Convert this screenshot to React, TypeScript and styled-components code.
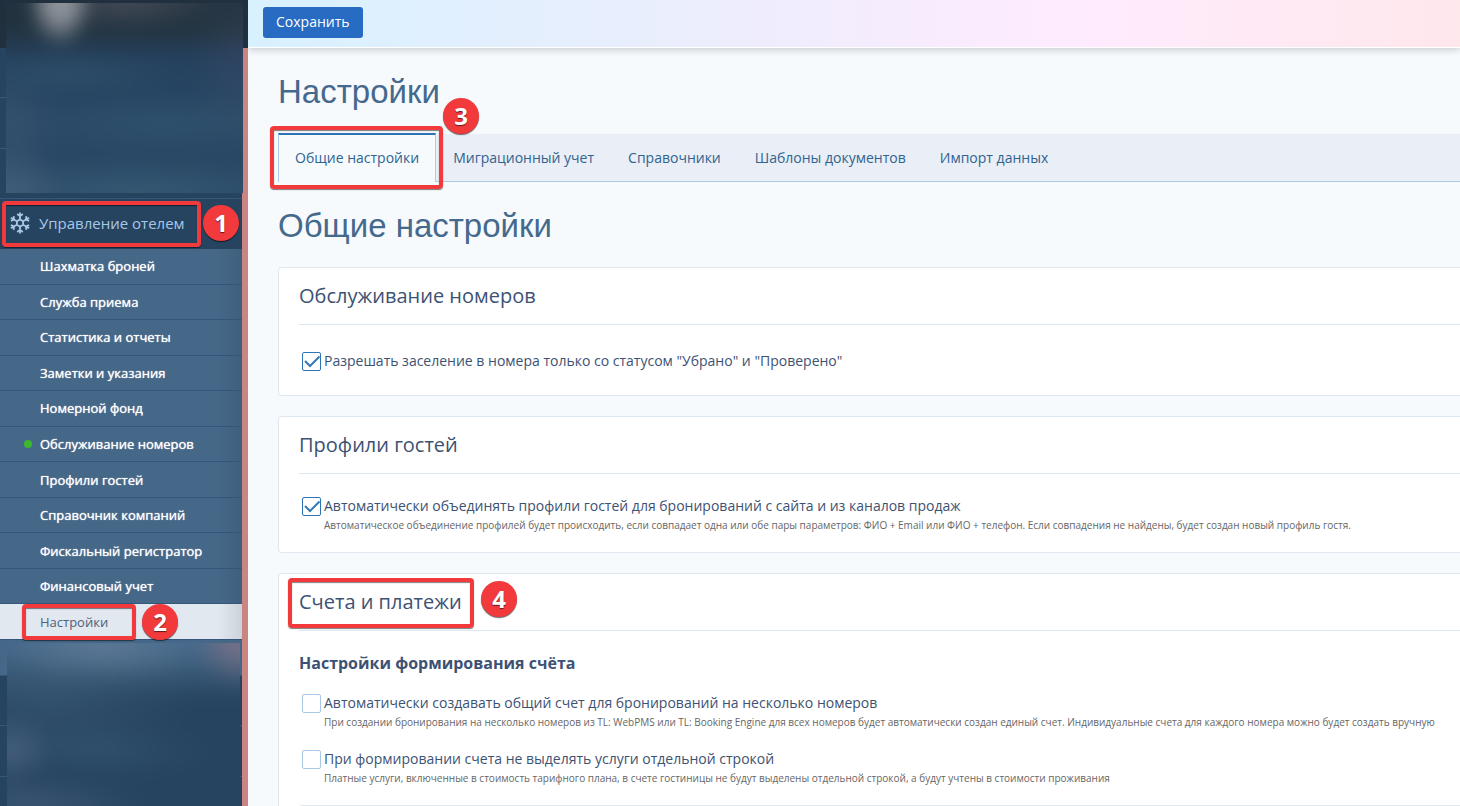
import React from "react";
import styled, { createGlobalStyle, css } from "styled-components";

const GlobalStyle = createGlobalStyle`
  *, *::before, *::after { box-sizing: border-box; }
  body {
    margin: 0;
    background: #f6fafd;
    color: #3d5273;
    font-family: "Open Sans", "Noto Sans", sans-serif;
    font-size: 14px;
  }
  h1, h2, h3, h4, p, ul { margin: 0; padding: 0; }
  ul { list-style: none; }
  a { color: inherit; text-decoration: none; }
`;

const Shell = styled.div`
  display: flex;
  height: 100vh;
  overflow: hidden;
`;

/* Sidebar */

const Sidebar = styled.aside`
  position: relative;
  flex: 0 0 248px;
  display: flex;
  flex-direction: column;
`;

const Brand = styled.div`
  flex: 0 0 48px;
  background: #21303e;
`;

const Nav = styled.nav`
  flex: 1;
  background: #26435f;
  border-right: 6px solid #c98581;
`;

const ClosedSections = styled.div`
  display: grid;
  grid-auto-rows: 1fr;
  min-height: 151px;
`;

const ClosedSection = styled.div`
  border-bottom: 1px solid #35587a;
`;

const SectionHead = styled.a`
  display: flex;
  align-items: center;
  gap: 9px;
  height: 50px;
  padding: 0 0 2px 10px;
  color: #a6c8e8;
  font-size: 15px;
  line-height: 20px;
`;

const SubMenu = styled.ul`
  display: grid;
  grid-auto-rows: 1fr;
  min-height: 391px;
  background: linear-gradient(to right, #466888 218px, #3f5f7d);
`;

const SubItem = styled.li`
  display: grid;
  position: relative;
  border-bottom: 1px solid #33567a;
`;

const SubLink = styled.a<{ $active?: boolean }>`
  display: flex;
  align-items: center;
  padding-left: 40px;
  font-size: 13px;
  line-height: 18px;
  color: #ffffff;
  text-shadow: 0 0 1px #ffffff;
  ${(p) =>
    p.$active &&
    css`
      background: linear-gradient(to right, #e1e8f0 218px, #cbd2d9);
      color: #4f6078;
      text-shadow: none;
    `}
`;

const OnlineDot = styled.span`
  position: absolute;
  left: 24px;
  top: 50%;
  width: 8px;
  height: 8px;
  margin-top: -4px;
  border-radius: 50%;
  background: #3cb82c;
`;

const PaleRow = styled.div`
  height: 36px;
  background: #466888;
  border-bottom: 1px solid #35587a;
`;

const Haze = styled.div`
  position: absolute;
  z-index: 1;
  overflow: hidden;
  &::before {
    content: "";
    position: absolute;
    inset: -20px;
    filter: blur(8px);
  }
`;

const HazeTop = styled(Haze)`
  left: 6px;
  top: 3px;
  width: 237px;
  height: 190px;
  &::before {
    background:
      radial-gradient(ellipse 32px 46px at 74px 18px, rgba(165, 168, 175, 0.8) 40%, transparent),
      radial-gradient(ellipse 100px 30px at 140px 18px, rgba(84, 86, 98, 0.7), transparent),
      radial-gradient(ellipse 120px 24px at 80px 90px, rgba(60, 95, 120, 0.4), transparent),
      radial-gradient(ellipse 160px 28px at 180px 140px, rgba(60, 98, 125, 0.4), transparent),
      radial-gradient(ellipse 60px 50px at 20px 140px, rgba(80, 100, 130, 0.35), transparent),
      radial-gradient(ellipse 60px 46px at 20px 205px, rgba(90, 110, 140, 0.5), transparent),
      radial-gradient(ellipse 170px 30px at 150px 208px, rgba(65, 105, 130, 0.5), transparent),
      radial-gradient(ellipse 60px 100px at 262px 80px, rgba(70, 80, 110, 0.35), transparent),
      linear-gradient(to bottom, #22313f, #22333f 46px, #24405d 74px, #264562 110px, #2b4a67);
  }
`;

const HazeBottom = styled(Haze)`
  left: 7px;
  top: 643px;
  width: 233px;
  bottom: 0;
  &::before {
    background:
      radial-gradient(ellipse 50px 44px at 255px 20px, rgba(150, 120, 135, 0.7), transparent),
      radial-gradient(ellipse 110px 36px at 115px 24px, rgba(110, 135, 160, 0.6), transparent),
      radial-gradient(ellipse 44px 36px at 22px 128px, rgba(90, 112, 145, 0.6), transparent),
      radial-gradient(ellipse 120px 30px at 110px 128px, rgba(58, 95, 120, 0.45), transparent),
      radial-gradient(ellipse 150px 60px at 60px 75px, rgba(65, 98, 125, 0.45), transparent),
      radial-gradient(ellipse 120px 30px at 40px 182px, rgba(80, 105, 135, 0.5), transparent),
      linear-gradient(to bottom, #446685, #44668a 24px, #3b5d7b 42px, #26435f 78px);
  }
`;

/* Step marks */

const StepFrame = styled.span<{ $inset: string }>`
  position: absolute;
  z-index: 2;
  inset: ${(p) => p.$inset};
  border: 4px solid #f23a3c;
  border-radius: 4px;
  box-shadow: 0 1px 1px rgba(0, 0, 0, 0.5), inset 0 1px 1px rgba(0, 0, 0, 0.5);
  pointer-events: none;
`;

const StepNumber = styled.span<{ $left: string; $top: string }>`
  position: absolute;
  z-index: 2;
  left: ${(p) => p.$left};
  top: ${(p) => p.$top};
  display: grid;
  place-items: center;
  width: 36px;
  height: 36px;
  border-radius: 50%;
  background: #f23a3c;
  box-shadow: 0 1px 1px rgba(0, 0, 0, 0.6);
  color: #ffffff;
  font: 700 24px/36px "Open Sans", sans-serif;
  text-shadow: 0 1px 1px rgba(0, 0, 0, 0.6);
  pointer-events: none;
`;

const Anchor = styled.div`
  position: relative;
`;

/* Main column */

const Main = styled.main`
  flex: 1;
  min-width: 0;
  display: flex;
  flex-direction: column;
`;

const TopBar = styled.header`
  flex: 0 0 48px;
  display: flex;
  align-items: flex-start;
  padding: 7px 15px;
  border-bottom: 1px solid #ffffff;
  background: linear-gradient(to right, #d8f1ff, #e9eefd 33%, #feebfe 67%, #ffe8ec) padding-box;
  box-shadow: 0 1px 8px rgba(0, 0, 0, 0.22);
`;

const SaveButton = styled.button`
  height: 31px;
  padding: 0 13px 2px;
  border: 0;
  border-radius: 3px;
  background: #286bc2;
  color: #ffffff;
  font: 400 14px/20px "Open Sans", sans-serif;
`;

const Content = styled.div`
  flex: 1;
  min-height: 0;
  overflow: hidden;
  padding: 22px 0 0 30px;
`;

const PageTitle = styled.h1`
  color: #45698c;
  font: 400 33px/44px "Liberation Sans", Arial, sans-serif;
`;

const SectionTitle = styled(PageTitle).attrs({ as: "h2" })`
  margin: 22px 0 19px;
`;

const Tabs = styled.nav`
  display: flex;
  height: 48px;
  margin-top: 20px;
  border-bottom: 1px solid #aecbe6;
  background: #eaeef6;
`;

const Tab = styled.a<{ $active?: boolean }>`
  display: flex;
  align-items: center;
  position: relative;
  padding: 0 17px;
  line-height: 20px;
  color: #2f6390;
  ${(p) =>
    p.$active &&
    css`
      margin: -1px 0;
      padding: 0 16px 2px;
      border: 1px solid #aecbe6;
      border-top: 2px solid #2e73b2;
      border-bottom: 0;
      background: #f6fafd;
    `}
`;

const Card = styled.section`
  margin-bottom: 20px;
  padding-left: 20px;
  border: 1px solid #dfe8f1;
  border-right: 0;
  border-radius: 4px 0 0 4px;
  background: #ffffff;
`;

const CardHead = styled.div`
  display: flex;
  border-bottom: 1px solid #dfe8f1;
`;

const CardTitle = styled.h3`
  color: #3d5273;
  font-size: 20px;
  font-weight: 400;
  line-height: 56px;
`;

const CardBody = styled.div<{ $pad: string }>`
  display: flex;
  flex-direction: column;
  gap: 18px;
  padding: ${(p) => p.$pad};
`;

const GroupTitle = styled.h4`
  font-size: 16px;
  font-weight: 700;
  line-height: 24px;
`;

const Group = styled.div`
  display: flex;
  flex-direction: column;
  gap: 18px;
  padding-bottom: 18px;
  border-bottom: 1px solid #dfe8f1;
  border-radius: 0 0 0 4px;
`;

const OptionGrid = styled.div`
  display: grid;
  grid-template-columns: 19px 1fr;
  column-gap: 3px;
  padding-left: 3px;
  align-items: center;
`;

const CheckInput = styled.input`
  appearance: none;
  grid-area: 1 / 1;
  width: 19px;
  height: 19px;
  margin: 0;
  border: 1px solid #a9c8e6;
  border-radius: 2px;
  background: #ffffff;
  &:checked { border-color: #2e73b2; }
  &:not(:checked) + svg { display: none; }
`;

const Tick = styled.svg`
  grid-area: 1 / 1;
  z-index: 1;
  pointer-events: none;
`;

const OptionLabel = styled.label`
  grid-area: 1 / 2;
  line-height: 20px;
  white-space: nowrap;
`;

const Hint = styled.p`
  grid-area: 2 / 2;
  color: #666666;
  font-size: 10px;
  line-height: 18px;
  white-space: nowrap;
`;

type OptionProps = { id: string; label: string; hint?: string; checked?: boolean };

function Option({ id, label, hint, checked }: OptionProps) {
  return (
    <OptionGrid>
      <CheckInput
        type="checkbox"
        id={id}
        defaultChecked={checked}
        aria-describedby={hint ? `${id}-hint` : undefined}
      />
      <Tick width="19" height="19" viewBox="0 0 19 19" fill="none" aria-hidden="true">
        <path d="M3 9l5 5 9.500-9.500" stroke="#3478b8" strokeWidth="2" />
      </Tick>
      <OptionLabel htmlFor={id}>{label}</OptionLabel>
      {hint && <Hint id={`${id}-hint`}>{hint}</Hint>}
    </OptionGrid>
  );
}

function SnowflakeIcon() {
  return (
    <svg width="20" height="22" viewBox="-10 -11 20 22" fill="none" stroke="#a6c8e8" strokeWidth="1.800" aria-hidden="true">
      <path d="M0-3.600L3.100-1.800V1.800L0 3.600L-3.100 1.800V-1.800Z" />
      {[0, 60, 120, 180, 240, 300].map((a) => (
        <g key={a} transform={`rotate(${a})`}>
          <path d="M0-3.600v-6.900M-2.800-9L0-6.800l2.800-2.200" />
        </g>
      ))}
    </svg>
  );
}

const menu = [
  "Шахматка броней",
  "Служба приема",
  "Статистика и отчеты",
  "Заметки и указания",
  "Номерной фонд",
  "Обслуживание номеров",
  "Профили гостей",
  "Справочник компаний",
  "Фискальный регистратор",
  "Финансовый учет",
  "Настройки",
];

const tabs = ["Общие настройки", "Миграционный учет", "Справочники", "Шаблоны документов", "Импорт данных"];

export default function App() {
  return (
    <>
      <GlobalStyle />
      <Shell>
        <Sidebar>
          <Brand />
          <Nav>
            <ClosedSections>
              <ClosedSection />
              <ClosedSection />
              <ClosedSection />
            </ClosedSections>
            <Anchor>
              <SectionHead href="#hotel">
                <SnowflakeIcon />
                Управление отелем
              </SectionHead>
              <StepFrame $inset="2px 41px 2px 2px" />
              <StepNumber $left="203px" $top="6px">1</StepNumber>
            </Anchor>
            <SubMenu>
              {menu.map((name) => {
                const active = name === "Настройки";
                return (
                  <SubItem key={name}>
                    {name === "Обслуживание номеров" && <OnlineDot />}
                    <SubLink href="#" $active={active} aria-current={active ? "page" : undefined}>
                      {name}
                    </SubLink>
                    {active && (
                      <>
                        <StepFrame $inset="0 106px -1px 22px" />
                        <StepNumber $left="142px" $top="0">2</StepNumber>
                      </>
                    )}
                  </SubItem>
                );
              })}
            </SubMenu>
            <PaleRow />
            <ClosedSections>
              <ClosedSection />
              <ClosedSection />
              <ClosedSection />
            </ClosedSections>
          </Nav>
          <HazeTop />
          <HazeBottom />
        </Sidebar>
        <Main>
          <TopBar>
            <SaveButton type="button">Сохранить</SaveButton>
          </TopBar>
          <Content>
            <PageTitle>Настройки</PageTitle>
            <Tabs>
              {tabs.map((name, i) => (
                <Tab key={name} href="#" $active={i === 0} aria-current={i === 0 ? "page" : undefined}>
                  {name}
                  {i === 0 && (
                    <>
                      <StepFrame $inset="-9px -8px -7px -9px" />
                      <StepNumber $left="164px" $top="-37px">3</StepNumber>
                    </>
                  )}
                </Tab>
              ))}
            </Tabs>
            <SectionTitle>Общие настройки</SectionTitle>
            <Card>
              <CardHead>
                <CardTitle>Обслуживание номеров</CardTitle>
              </CardHead>
              <CardBody $pad="26px 0 24px">
                <Option
                  id="clean-only"
                  checked
                  label={'Разрешать заселение в номера только со статусом "Убрано" и "Проверено"'}
                />
              </CardBody>
            </Card>
            <Card>
              <CardHead>
                <CardTitle>Профили гостей</CardTitle>
              </CardHead>
              <CardBody $pad="22px 0 18px">
                <Option
                  id="merge-profiles"
                  checked
                  label="Автоматически объединять профили гостей для бронирований с сайта и из каналов продаж"
                  hint="Автоматическое объединение профилей будет происходить, если совпадает одна или обе пары параметров: ФИО + Email или ФИО + телефон. Если совпадения не найдены, будет создан новый профиль гостя."
                />
              </CardBody>
            </Card>
            <Card>
              <CardHead>
                <Anchor>
                  <CardTitle>Счета и платежи</CardTitle>
                  <StepFrame $inset="4px -12px 2px -11px" />
                  <StepNumber $left="182px" $top="7px">4</StepNumber>
                </Anchor>
              </CardHead>
              <CardBody $pad="20px 0 18px">
                <GroupTitle>Настройки формирования счёта</GroupTitle>
                <Group>
                  <Option
                    id="common-bill"
                    label="Автоматически создавать общий счет для бронирований на несколько номеров"
                    hint="При создании бронирования на несколько номеров из TL: WebPMS или TL: Booking Engine для всех номеров будет автоматически создан единый счет. Индивидуальные счета для каждого номера можно будет создать вручную"
                  />
                  <Option
                    id="no-service-lines"
                    label="При формировании счета не выделять услуги отдельной строкой"
                    hint="Платные услуги, включенные в стоимость тарифного плана, в счете гостиницы не будут выделены отдельной строкой, а будут учтены в стоимости проживания"
                  />
                </Group>
              </CardBody>
            </Card>
          </Content>
        </Main>
      </Shell>
    </>
  );
}
